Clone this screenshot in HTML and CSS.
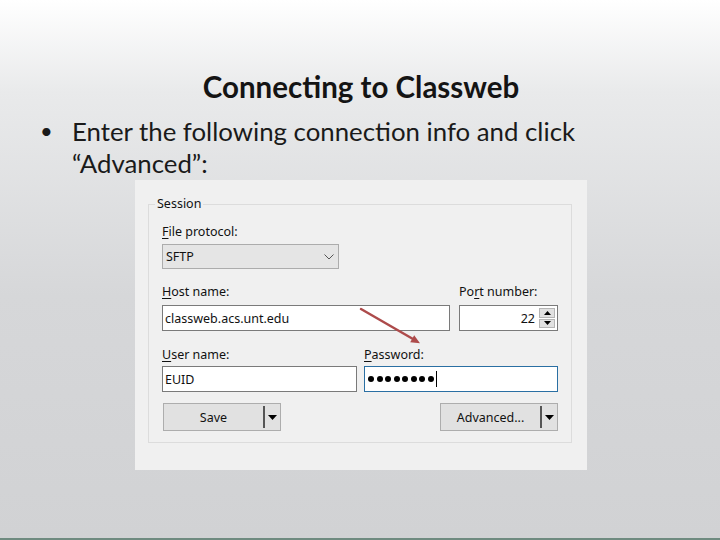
FILE: index.html
```html
<!DOCTYPE html>
<html lang="en">
<head>
<meta charset="utf-8">
<title>Connecting to Classweb</title>
<link rel="stylesheet" href="styles.css">
</head>
<body>
<div class="slide">
  <h1 class="title">Connecting to Classweb</h1>
  <ul class="points">
    <li><span class="dot">•</span><span class="ptext">Enter the following connection info and click “Advanced”:</span></li>
  </ul>
  <div class="shot">
    <fieldset class="session">
      <legend>Session</legend>
      <div class="field">
        <div class="lbl lbl-first"><u>F</u>ile protocol:</div>
        <div class="combo"><span>SFTP</span>
          <svg class="chev" width="10" height="6" viewBox="0 0 10 6"><path d="M0.5 0.5 L5 5 L9.5 0.5" fill="none" stroke="#555" stroke-width="1"/></svg>
        </div>
      </div>
      <div class="grid grid-host">
        <div class="lbl lbl-host"><u>H</u>ost name:</div>
        <div class="lbl lbl-host">Po<u>r</u>t number:</div>
        <div class="edit">classweb.acs.unt.edu</div>
        <div class="edit port">
          <span class="num">22</span>
          <span class="spin">
            <span class="sbtn"><svg width="7" height="4" viewBox="0 0 7 4"><path d="M0 4 L3.5 0 L7 4Z" fill="#000"/></svg></span>
            <span class="sbtn"><svg width="7" height="4" viewBox="0 0 7 4"><path d="M0 0 L7 0 L3.5 4Z" fill="#000"/></svg></span>
          </span>
        </div>
      </div>
      <div class="grid grid-user">
        <div class="lbl lbl-user"><u>U</u>ser name:</div>
        <div class="lbl lbl-user"><u>P</u>assword:</div>
        <div class="edit">EUID</div>
        <div class="edit focus" aria-label="password">
          <span class="pdots"><i></i><i></i><i></i><i></i><i></i><i></i><i></i><i></i></span><span class="caret"></span>
        </div>
      </div>
      <div class="buttons">
        <div class="sbutton"><span class="blabel">Save</span><span class="sep"></span><span class="drop"><svg width="9" height="5" viewBox="0 0 9 5"><path d="M0 0 L9 0 L4.5 5Z" fill="#000"/></svg></span></div>
        <div class="sbutton"><span class="blabel">Advanced...</span><span class="sep"></span><span class="drop"><svg width="9" height="5" viewBox="0 0 9 5"><path d="M0 0 L9 0 L4.5 5Z" fill="#000"/></svg></span></div>
      </div>
    </fieldset>
    <svg class="arrow" width="66" height="42" viewBox="0 0 66 42">
      <line x1="2" y1="2" x2="54" y2="32" stroke="#ad4b4b" stroke-width="2.5" stroke-linecap="round"/>
      <polygon points="61,36.2 51.2,35.2 55.2,28.2" fill="#ad4b4b"/>
    </svg>
  </div>
</div>
</body>
</html>
```
FILE: styles.css
```css
html, body {
  margin: 0;
  padding: 0;
}
body {
  width: 720px;
  height: 540px;
  overflow: hidden;
}
.slide {
  width: 720px;
  height: 540px;
  box-sizing: border-box;
  padding-top: 69px;
  background: linear-gradient(180deg, #ffffff 0%, #e9eaeb 17%, #d6d7d9 55%, #d1d2d4 100%);
  border-bottom: 2px solid #6f8b80;
}
.title {
  margin: 0;
  padding-left: 2px;
  height: 36px;
  line-height: 36px;
  text-align: center;
  font-family: Lato, "Liberation Sans", sans-serif;
  font-weight: 700;
  font-size: 29.5px;
  color: #141414;
}
.points {
  list-style: none;
  margin: 10px 0 0 0;
  padding: 0 80px 0 40px;
  font-family: Lato, "Liberation Sans", sans-serif;
  font-size: 25.8px;
  line-height: 32px;
  color: #1a1a1a;
}
.points li {
  display: flex;
}
.dot {
  flex: 0 0 32px;
  font-size: 22px;
}
.shot {
  position: relative;
  margin: 1px 0 0 135px;
  width: 452px;
  height: 290px;
  box-sizing: border-box;
  padding: 16px 15px 0 13px;
  background: #f0f0f0;
  font-family: "Noto Sans", "Open Sans", sans-serif;
  font-size: 12.5px;
  color: #111;
}
.session {
  margin: 0;
  width: 424px;
  box-sizing: border-box;
  border: 1px solid #dcdcdc;
  padding: 12px 13px 11px 13px;
}
.session legend {
  margin-left: -7px;
  padding: 0 2px;
  line-height: 16px;
}
.lbl {
  line-height: 16px;
  white-space: nowrap;
}
.lbl u {
  text-underline-offset: 2px;
}
.lbl-first { margin-bottom: 4px; }
.lbl-host { margin-bottom: 5px; }
.lbl-user { margin-bottom: 3px; }
.combo {
  width: 177px;
  height: 25px;
  box-sizing: border-box;
  background: #e5e5e5;
  border: 1px solid #acacac;
  display: flex;
  align-items: center;
  justify-content: space-between;
  padding: 0 4px 0 3px;
}
.grid {
  display: grid;
}
.grid-host {
  margin-top: 15px;
  grid-template-columns: 288px 99px;
  column-gap: 9px;
}
.grid-user {
  margin-top: 16px;
  grid-template-columns: 195px 194px;
  column-gap: 7px;
}
.edit {
  height: 26px;
  box-sizing: border-box;
  background: #fff;
  border: 1px solid #7a7a7a;
  padding: 0 2px;
  display: flex;
  align-items: center;
  white-space: nowrap;
}
.edit.focus {
  border-color: #2a6fa3;
  padding-left: 3px;
}
.port {
  padding: 2px 2px 2px 2px;
  gap: 4px;
}
.num {
  flex: 1;
  text-align: right;
}
.spin {
  width: 16px;
  height: 20px;
  display: flex;
  flex-direction: column;
  gap: 1px;
}
.sbtn {
  flex: 1;
  box-sizing: border-box;
  background: #e1e1e1;
  border: 1px solid #b5b5b5;
  display: flex;
  align-items: center;
  justify-content: center;
}
.pdots {
  display: flex;
  gap: 2.5px;
}
.pdots i {
  width: 6px;
  height: 6px;
  border-radius: 50%;
  background: #000;
}
.caret {
  width: 1px;
  height: 16px;
  background: #000;
  margin-left: 2px;
}
.buttons {
  margin-top: 11px;
  padding-left: 1px;
  display: flex;
  justify-content: space-between;
}
.sbutton {
  width: 118px;
  height: 28px;
  box-sizing: border-box;
  background: #e1e1e1;
  border: 1px solid #adadad;
  display: flex;
  align-items: center;
}
.blabel {
  flex: 1;
  text-align: center;
}
.sep {
  width: 2px;
  height: 22px;
  background: #555;
}
.drop {
  width: 15px;
  display: flex;
  justify-content: center;
  align-items: center;
}
.arrow {
  position: absolute;
  left: 224px;
  top: 127px;
}
```
